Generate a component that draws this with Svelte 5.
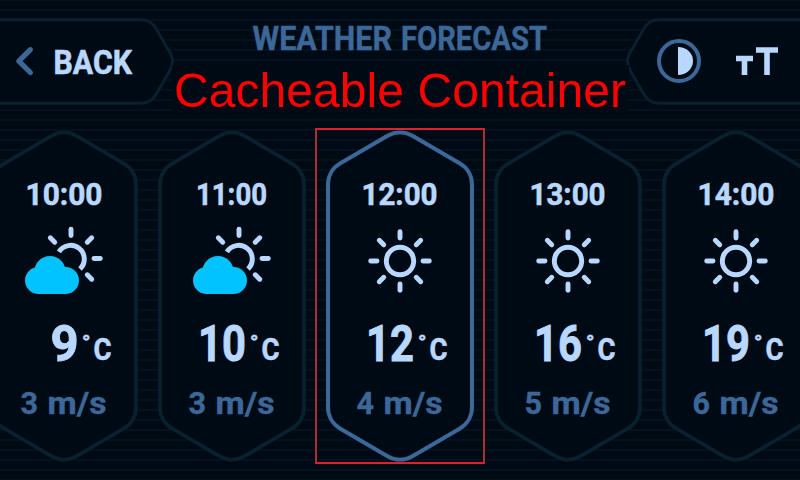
<script>
  const hours = [
    { time: '10:00', icon: 'cloudy', temp: '9', wind: '3', tx: 36.5, tw: 75 },
    { time: '11:00', icon: 'cloudy', temp: '10', wind: '3', tx: 39, tw: 69 },
    { time: '12:00', icon: 'sun', temp: '12', wind: '4', selected: true, tx: 36.5, tw: 74 },
    { time: '13:00', icon: 'sun', temp: '16', wind: '5', tx: 36.5, tw: 74 },
    { time: '14:00', icon: 'sun', temp: '19', wind: '6', tx: 36.5, tw: 75 }
  ];
  const allRays = [0, 45, 90, 135, 180, 225, 270, 315];
  const cloudRays = [0, 45, 90, 135, 315];
</script>

{#snippet word(text, x, y, width, size)}
  <text {x} {y} font-size={size} textLength={width} lengthAdjust="spacingAndGlyphs">{text}</text>
{/snippet}

{#snippet rays(angles)}
  {#each angles as a}
    <path d="M0 -23V-29.3" transform="rotate({a})" />
  {/each}
{/snippet}

<main class="screen">
  <header>
    <button class="back" aria-label="Back">
      <svg width="172" height="112" viewBox="0 0 172 112">
        <path class="frame" d="M-6 19.7H140.6Q151 19.7 156 28.5L170.1 52.9Q175 61.5 170.1 70.1L156 94.5Q151 103.3 140.6 103.3H-6Z" />
        <path class="chevron" d="M30.4 49.7L18.8 61.2L30.4 72.5" />
        <g class="bright">{@render word('BACK', 53.5, 74, 78.5, 32.5)}</g>
      </svg>
    </button>
    <div class="heading">
      <svg class="title" width="457" height="65" viewBox="172 0 457 65">
        <g class="muted">
          {@render word('WEATHER', 252.5, 50, 139.5, 32.5)}
          {@render word('FORECAST', 401, 50, 146, 32.5)}
        </g>
      </svg>
      <svg class="caption" width="457" height="49" viewBox="172 65 457 49">
        {@render word('Cacheable Container', 174, 107, 452, 49)}
      </svg>
    </div>
    <div class="tools">
      <svg width="171" height="112" viewBox="629 0 171 112">
        <path class="frame" d="M806 19.7H659.4Q649 19.7 644 28.5L629.9 52.9Q625 61.5 629.9 70.1L644 94.5Q649 103.3 659.4 103.3H806Z" />
        <circle class="ring" cx="679" cy="61" r="20" />
        <path class="solid" d="M678 47A15 14 0 0 1 678 75Z" />
        <path class="size" d="M736 58.5H753M744.5 58V75M756 50H778M767 50V75" />
      </svg>
    </div>
  </header>

  <section class="cards">
    {#each hours as h}
      <article class:selected={h.selected}>
        <svg class="outline" width="148" height="334" viewBox="0 129 148 334">
          <path d="M2 184.4A24 24 0 0 1 14 163.6L62 135.6A24 24 0 0 1 86 135.6L134 163.6A24 24 0 0 1 146 184.4V407.6A24 24 0 0 1 134 428.4L86 456.4A24 24 0 0 1 62 456.4L14 428.4A24 24 0 0 1 2 407.6Z" />
        </svg>
        <div class="content">
          <svg class="bright" width="148" height="84" viewBox="0 129 148 84">
            {@render word(h.time, h.tx - 1, 205, h.tw + 2, 32)}
          </svg>
          <svg class="icon" width="148" height="95" viewBox="0 213 148 95">
            {#if h.icon === 'sun'}
              <g transform="translate(74 261)">
                <circle r="13.7" />
                {@render rays(allRays)}
              </g>
            {:else}
              <g transform="translate(81 258.5)">
                <path class="arc" d="M-12.1 -6.6A13.7 13.7 0 1 1 9 10.5" />
                {@render rays(cloudRays)}
              </g>
              <g class="cloud">
                <circle cx="60" cy="271.5" r="15.5" />
                <rect x="35" y="267" width="54" height="27" rx="13.5" />
              </g>
            {/if}
          </svg>
          <svg class="bright" width="148" height="70" viewBox="0 308 148 70">
            <text
              class="degrees"
              transform={h.temp.length === 1 ? 'translate(60.5 361) scale(.98 1)' : 'translate(40 361) scale(.835 1)'}
            >{h.temp}</text>
            {@render word('°', 92, 350, 8.5, 21)}
            {@render word('C', 103.5, 360, 18, 32)}
          </svg>
          <svg class="muted" width="148" height="50" viewBox="0 378 148 50">
            {@render word(h.wind, 30.5, 414, 17.5, 32)}
            {@render word('m/s', 57.5, 414, 59, 32)}
          </svg>
        </div>
        {#if h.selected}<div class="marker"></div>{/if}
      </article>
    {/each}
  </section>
</main>

<style>
  :global(body) { margin: 0; background: #000a14; }
  .screen {
    width: 800px;
    height: 480px;
    overflow: hidden;
    display: flex;
    flex-direction: column;
    background: repeating-linear-gradient(to bottom, #041220 0 1px, #000a14 1px 9px, #041220 9px 10px);
    font-family: Roboto, "Liberation Sans", sans-serif;
    font-weight: 700;
  }
  svg { display: block; overflow: visible; }
  header { display: flex; height: 129px; flex: none; align-items: flex-start; }
  .back { width: 172px; padding: 0; border: 0; background: none; font: inherit; }
  .heading { width: 457px; z-index: 1; }
  .caption {
    background: #000a14;
    fill: #ff0000;
    font-family: "Liberation Sans", sans-serif;
    font-weight: 400;
  }
  .tools { width: 171px; }
  .frame { fill: #000a14; stroke: #09212f; stroke-width: 3; }
  .chevron { fill: none; stroke: #3c6899; stroke-width: 5.2; stroke-linecap: round; stroke-linejoin: round; }
  .bright { fill: #b9d8ff; }
  .muted { fill: #3c6899; }
  .bright text { stroke: #b9d8ff; stroke-width: 0.6; }
  .muted text { stroke: #3c6899; stroke-width: 0.4; }
  .bright .degrees { font-size: 50px; stroke-width: 0.9; }
  .ring { fill: none; stroke: #3c6899; stroke-width: 4; }
  .solid { fill: #b9d8ff; }
  .size { fill: none; stroke: #b9d8ff; stroke-width: 5.6; }
  .cards { display: flex; gap: 20px; margin-left: -10px; }
  article { position: relative; flex: none; width: 148px; height: 334px; }
  .outline { position: absolute; inset: 0; }
  .outline path { fill: #000a14; stroke: #09212f; stroke-width: 3.8; }
  .selected .outline path { stroke: #3c6899; stroke-width: 4; }
  .content { position: relative; display: flex; flex-direction: column; }
  .icon { fill: none; stroke: #b9d8ff; stroke-width: 4.9; stroke-linecap: round; }
  .arc { stroke-linecap: butt; }
  .cloud { fill: #00c3ff; stroke: none; }
  .marker { position: absolute; inset: -1px -11px -1px -11px; border: 2px solid #e0202a; border-left-color: #a92e38; border-right-color: #a92e38; }
</style>
